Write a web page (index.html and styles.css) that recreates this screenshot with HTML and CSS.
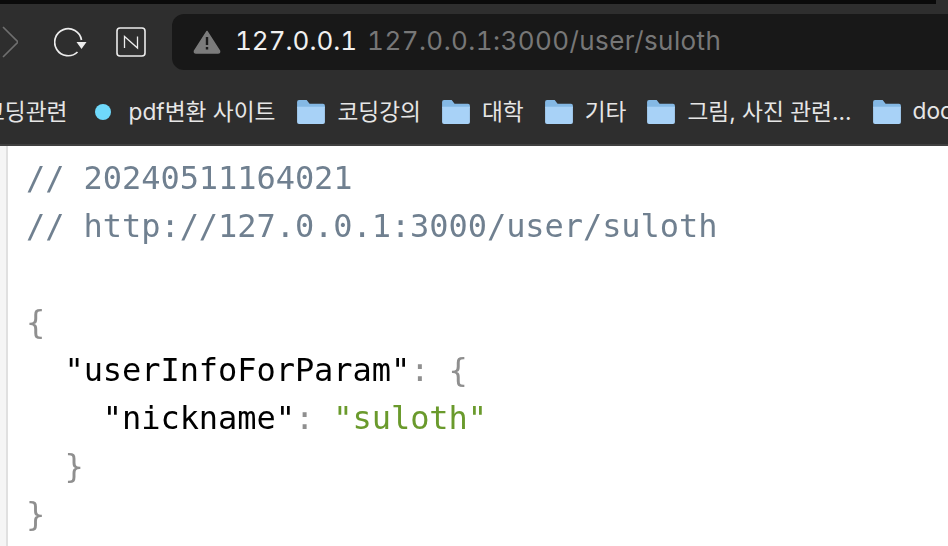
FILE: index.html
```html
<!DOCTYPE html>
<html lang="ko">
<head>
<meta charset="utf-8">
<title>127.0.0.1:3000/user/suloth</title>
<link rel="stylesheet" href="styles.css">
</head>
<body>
<header class="chrome">
  <div class="topbar"><div class="topbar-end"></div></div>
  <div class="toolbar">
    <svg class="icon-forward" width="16" height="32" viewBox="0 0 16 32"><path d="M1 1 L16 16 L1 31" fill="none" stroke="#6f6f6f" stroke-width="1.6"/></svg>
    <svg class="icon-reload" width="34" height="32" viewBox="0 0 34 32"><path d="M27.500 14 A13.500 13.500 0 1 0 23.500 26" fill="none" stroke="#ececec" stroke-width="1.700"/><path d="M22.500 16 H32.500 L27.500 23 Z" fill="#ececec"/></svg>
    <svg class="icon-notion" width="30" height="30" viewBox="0 0 30 30"><rect x="1" y="1" width="28" height="28" rx="3" fill="none" stroke="#ececec" stroke-width="1.600"/><path d="M8.500 21 V9.500 L21.500 21 V9.500" fill="none" stroke="#ececec" stroke-width="1.300"/></svg>
    <div class="omnibox">
      <svg class="icon-warn" width="28" height="24" viewBox="0 0 28 24"><path d="M14 1.500 L26.500 21 Q27 23 25 23 H3 Q1 23 1.500 21 Z" fill="#7c7c7c" stroke="#7c7c7c" stroke-width="1.500" stroke-linejoin="round"/><rect x="12.800" y="7" width="2.400" height="8" fill="#1a1a1a"/><rect x="12.800" y="17" width="2.400" height="2.500" fill="#1a1a1a"/></svg>
      <span class="host">127.0.0.1</span>
      <span class="url">127.0.0.1:3000/user/suloth</span>
    </div>
  </div>
  <nav class="bookmarks">
    <span class="bm bm-first">코딩관련</span>
    <span class="bm bm-pdf"><i class="dot"></i>pdf변환 사이트</span>
    <span class="bm"><svg class="folder" width="28" height="24" viewBox="0 0 29 25"><use href="#f"/></svg>코딩강의</span>
    <span class="bm"><svg class="folder" width="28" height="24" viewBox="0 0 29 25"><use href="#f"/></svg>대학</span>
    <span class="bm"><svg class="folder" width="28" height="24" viewBox="0 0 29 25"><use href="#f"/></svg>기타</span>
    <span class="bm"><svg class="folder" width="28" height="24" viewBox="0 0 29 25"><use href="#f"/></svg>그림, 사진 관련...</span>
    <span class="bm"><svg class="folder" width="28" height="24" viewBox="0 0 29 25"><use href="#f"/></svg>docs</span>
  </nav>
</header>
<svg class="defs" width="0" height="0"><defs><g id="f"><path d="M0 2 Q0 0 2 0 H10 L13 4 H27 Q29 4 29 6 V8 H0 Z" fill="#84b8e4"/><path d="M0 7 H29 V23 Q29 25 27 25 H2 Q0 25 0 23 Z" fill="#a8d2f7"/></g></defs></svg>
<main class="page">
  <div class="gutter"></div>
<pre class="code"><span class="comment">// 20240511164021
// http://127.0.0.1:3000/user/suloth</span>

<span class="punc">{</span>
  <span class="key">"userInfoForParam"</span><span class="punc">: {</span>
    <span class="key">"nickname"</span><span class="punc">: </span><span class="str">"suloth"</span>
  <span class="punc">}</span>
<span class="punc">}</span></pre>
</main>
</body>
</html>
```

FILE: styles.css
```css
html, body {
  margin: 0;
  padding: 0;
  width: 948px;
  height: 546px;
  overflow: hidden;
  background: #fff;
}

.chrome {
  height: 146px;
  background: #2e2e2e;
  border-bottom: 2px solid #404040;
  box-sizing: border-box;
  font-family: Inter, "Noto Sans CJK KR", sans-serif;
}

.topbar {
  height: 4px;
  background: #2e2e2e;
  display: flex;
}
.topbar::before {
  content: "";
  width: 936px;
  background: #0a0a0a;
}
.topbar-end { flex: 1; background: #2e2e2e; }

.toolbar {
  height: 76px;
  display: flex;
  align-items: center;
  overflow: hidden;
}

.icon-forward { margin-left: 2px; flex: none; }
.icon-reload { margin-left: 36px; flex: none; }
.icon-notion { margin-left: 28px; flex: none; }

.omnibox {
  margin-left: 26px;
  flex: 1;
  height: 56px;
  box-sizing: border-box;
  padding-bottom: 4px;
  background: #181818;
  border-radius: 12px 0 0 12px;
  display: flex;
  align-items: center;
  font-size: 26px;
  font-feature-settings: "tnum";
  white-space: nowrap;
}
.icon-warn { margin: 4px 0 0 21px; flex: none; }
.host { margin-left: 14px; color: #f0f0f0; }
.url { margin-left: 10px; color: #777; letter-spacing: 0.42px; }

.bookmarks {
  height: 64px;
  box-sizing: border-box;
  padding-bottom: 4px;
  display: flex;
  align-items: center;
  gap: 21px;
  margin-left: -16px;
  color: #e6e6e6;
  font-size: 22.7px;
  white-space: nowrap;
  overflow: hidden;
}
.bm { display: flex; align-items: center; flex: none; }
.bm-pdf { margin-right: 1px; }
.dot {
  width: 16px;
  height: 16px;
  border-radius: 50%;
  background: #6fd9fb;
  margin: 4px 18px 0 6px;
}
.folder { margin: 4px 12px 0 0; flex: none; }
.defs { position: absolute; }

.page {
  display: flex;
  height: 400px;
  background: #fff;
}
.gutter {
  width: 6px;
  background: #f5f5f5;
  border-right: 2px solid #e0e0e0;
  flex: none;
}
.code {
  margin: 8px 0 0 18px;
  font-family: "DejaVu Sans Mono", monospace;
  font-size: 32px;
  letter-spacing: -0.06px;
  line-height: 48px;
  color: #000;
  will-change: opacity;
}
.comment { color: #708090; }
.punc { color: #8f8f8f; }
.key { color: #000; }
.str { color: #6a9a2c; }
```
